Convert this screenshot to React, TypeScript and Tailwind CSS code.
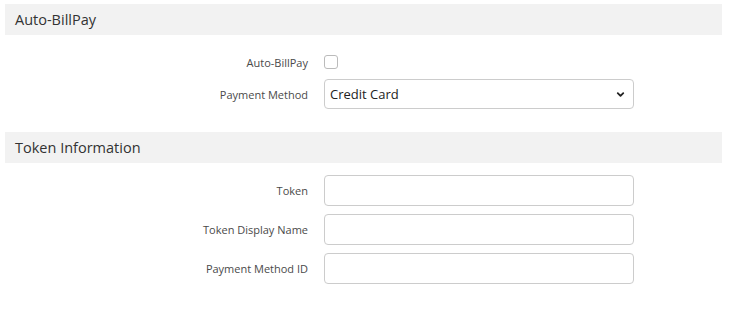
import { ChevronDown } from "lucide-react";

type FieldProps = { label: string; height: string; children: React.ReactNode };

function Field({ label, height, children }: FieldProps) {
  return (
    <div className={`flex items-center ${height}`}>
      <label className="w-[308px] shrink-0 whitespace-nowrap text-right text-[11px] leading-none text-[#4a4a4a]">{label}</label>
      <div className="ml-[16px] flex w-[310px] items-center">{children}</div>
    </div>
  );
}

function SectionHeader({ title }: { title: string }) {
  return (
    <div className="ml-[5px] mr-[8px] flex h-[31px] items-center bg-[#f2f2f2] px-[10px] text-[14.5px] text-[#333]">
      {title}
    </div>
  );
}

function TextBox() {
  return <input type="text" className="h-[31px] w-full rounded-[4px] border border-[#ccc] bg-white px-2 outline-none" />;
}

export default function App() {
  return (
    <div className="h-[314px] w-[730px] bg-white pt-[4px] font-['Open_Sans','Noto_Sans',sans-serif]">
      <SectionHeader title="Auto-BillPay" />
      <div className="mt-[20px] flex flex-col gap-[10px]">
        <Field label="Auto-BillPay" height="h-[14px]">
          <input type="checkbox" className="block h-[14px] w-[14px] appearance-none rounded-[3px] border border-[#bbb] bg-white" />
        </Field>
        <Field label="Payment Method" height="h-[30px]">
          <div className="relative h-[30px] w-full rounded-[4px] border border-[#ccc] bg-white">
            <span className="absolute left-[5px] top-[5px] text-[13px] leading-[18px] text-[#222]">Credit Card</span>
            <ChevronDown className="absolute right-[7px] top-[9px] h-[11px] w-[11px] text-[#222]" strokeWidth={4} />
          </div>
        </Field>
      </div>
      <div className="mt-[23px]">
        <SectionHeader title="Token Information" />
      </div>
      <div className="mt-[12px] flex flex-col gap-[8px]">
        <Field label="Token" height="h-[31px]">
          <TextBox />
        </Field>
        <Field label="Token Display Name" height="h-[31px]">
          <TextBox />
        </Field>
        <Field label="Payment Method ID" height="h-[31px]">
          <TextBox />
        </Field>
      </div>
    </div>
  );
}
